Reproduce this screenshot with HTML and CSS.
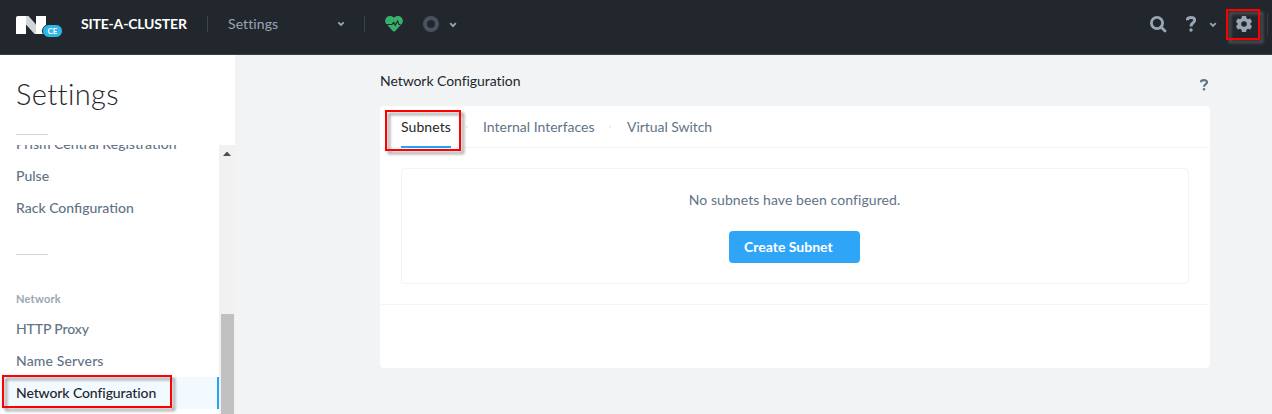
FILE: index.html
```html
<!DOCTYPE html>
<html lang="en">
<head>
<meta charset="utf-8">
<title>Settings - Network Configuration</title>
<link rel="stylesheet" href="styles.css">
</head>
<body>
<header class="topbar">
  <div class="logo">
    <svg width="30" height="18" viewBox="0 0 30 18"><path d="M2 0H10V18H0V2Q0 0 2 0Z" fill="#fff"/><path d="M20 0H30V18H20Z" fill="#fff"/><path d="M10 0H12.500L20 8.500V18H18.500L10 8.500Z" fill="#d4d5d6"/></svg>
    <span class="badge">CE</span>
  </div>
  <span class="cluster">SITE-A-CLUSTER</span>
  <span class="sep"></span>
  <span class="page">Settings</span>
  <svg class="chev chev-page" width="8" height="6" viewBox="0 0 8 6"><path d="M1.300 1.300L4 4L6.700 1.300"/></svg>
  <span class="sep sep-two"></span>
  <svg class="heart" width="18" height="16" viewBox="0 0 18 16"><path d="M9 1.800C7-.6 3.500-.4 1.600 1.400C-.3 3.300-.3 6.200 1.300 8L7.800 15Q9 16.200 10.200 15L16.700 8C18.300 6.200 18.300 3.300 16.400 1.400C14.500-.4 11-.6 9 1.800Z" fill="#36b06b"/><path d="M1 8.500H7L8.700 6.300L10.200 9.200L12.500 5L14 8.500H15.500" fill="none" stroke="#22272e" stroke-width="1.200"/></svg>
  <span class="ring"></span>
  <svg class="chev chev-ring" width="8" height="6" viewBox="0 0 8 6"><path d="M1.200 1.200L4 4.200L6.800 1.200"/></svg>
  <div class="actions">
    <svg class="search" width="17" height="17" viewBox="0 0 17 17"><circle cx="7" cy="7" r="5.600"/><path d="M11 11L15 15"/></svg>
    <svg class="help" width="10" height="16" viewBox="0 0 10 16"><path d="M1.200 4.200C1.300 .6 8.700 .5 8.700 4.300C8.700 7 5 6.600 5 10.400"/><circle cx="5" cy="14" r="1.700"/></svg>
    <svg class="chev chev-help" width="8" height="6" viewBox="0 0 8 6"><path d="M1.200 1.200L4 4L6.800 1.200"/></svg>
    <div class="gear">
      <svg width="16" height="16" viewBox="0 0 16 16"><path fill-rule="evenodd" d="M6 0H10L10.500 2.300L12 3.200L14.200 2.500L16 5.700L14.400 7.200V8.800L16 10.300L14.200 13.500L12 12.800L10.500 13.700L10 16H6L5.500 13.700L4 12.800L1.800 13.500L0 10.300L1.600 8.800V7.200L0 5.700L1.800 2.500L4 3.200L5.500 2.300ZM8 5.200A2.800 2.800 0 1 0 8 10.800A2.800 2.800 0 1 0 8 5.200Z" fill="#9aa5b5"/></svg>
      <span class="mark mark-gear"></span>
    </div>
    <span class="edge"></span>
  </div>
</header>
<div class="layout">
  <aside class="sidebar">
    <h1>Settings</h1>
    <div class="rule"></div>
    <div class="scroller">
      <nav class="menu">
        <a class="item"><span>Prism Central Registration</span></a>
        <a class="item"><span>Pulse</span></a>
        <a class="item"><span>Rack Configuration</span></a>
        <div class="rule rule-group"></div>
        <div class="group">Network</div>
        <a class="item i-proxy"><span>HTTP Proxy</span></a>
        <a class="item i-names"><span>Name Servers</span></a>
        <a class="item i-network active"><span>Network Configuration</span><i class="mark mark-menu"></i></a>
      </nav>
      <div class="scrollbar">
        <svg width="8" height="4" viewBox="0 0 8 4"><path d="M0 4L3.500 0H4.500L8 4Z" fill="#505050"/></svg>
        <div class="thumb"></div>
      </div>
    </div>
  </aside>
  <main class="content">
    <div class="heading">
      <h2>Network Configuration</h2>
      <svg class="help-page" width="8" height="12" viewBox="0 0 8 12"><path d="M1 3.200C1 .5 7 .4 7 3.200C7 5.200 4 5 4 7.800"/><path d="M2.800 9.200H5.200V11.400H2.800Z" class="dot"/></svg>
    </div>
    <section class="panel">
      <div class="tabs">
        <a class="tab t-sub selected">Subnets<i class="mark mark-tab"></i></a>
        <span class="dot-sep"></span>
        <a class="tab t-int">Internal Interfaces</a>
        <span class="dot-sep"></span>
        <a class="tab t-vs">Virtual Switch</a>
      </div>
      <div class="empty">
        <p>No subnets have been configured.</p>
        <button>Create Subnet</button>
      </div>
      <div class="footer"></div>
    </section>
  </main>
</div>
</body>
</html>
```
FILE: styles.css
```css
* { box-sizing: border-box; }
body { margin: 0; height: 414px; overflow: hidden; background: #f2f3f5; font: 14px/20px Lato, sans-serif; color: #627386; }
svg { display: block; flex: none; }

.topbar { height: 55px; display: flex; align-items: flex-start; background: #22272e; border-bottom: 1px solid #36404b; padding-left: 16px; }
.logo { position: relative; width: 65px; padding-top: 16px; }
.badge { position: absolute; left: 26px; top: 24px; width: 21px; height: 14px; border: 1px solid #22272e; border-radius: 7px; background: #2fb6ea; color: #fff; font-size: 8px; font-weight: 700; line-height: 12px; text-align: center; }
.cluster { width: 126px; padding-top: 14px; color: #fff; font-weight: 700; letter-spacing: -.18px; white-space: nowrap; }
.sep { width: 1px; height: 16px; margin-top: 16px; background: #3c444e; }
.page { width: 109px; margin-left: 20px; padding-top: 14px; color: #9aa5b5; letter-spacing: .1px; }
.chev { fill: none; stroke: #9aa5b5; stroke-width: 1.800; }
.chev-page { margin-top: 21px; }
.sep-two { margin-left: 19px; }
.heart { margin: 16px 0 0 20px; }
.ring { width: 16px; height: 16px; margin: 16px 0 0 20px; border: 4px solid #4b525e; border-radius: 50%; }
.chev-ring { margin: 22px 0 0 10px; }
.actions { display: flex; margin-left: auto; }
.search { margin-top: 16px; fill: none; stroke: #9aa5b5; stroke-width: 2.800; stroke-linecap: round; }
.help { margin: 16px 0 0 19px; fill: none; stroke: #9aa5b5; stroke-width: 2.900; }
.help circle { fill: #9aa5b5; stroke: none; }
.chev-help { margin: 22px 0 0 13px; }
.gear { position: relative; margin: 16px 15px 0 19px; }
.edge { width: 1px; height: 22px; margin: 13px 4px 0 0; background: #343b45; }

.layout { display: flex; height: 359px; }
.sidebar { width: 235px; background: #fff; display: flex; flex-direction: column; }
h1 { margin: 0; padding: 20px 0 0 16px; height: 79px; color: #22272e; font-size: 29px; line-height: 38px; font-weight: 300; letter-spacing: .4px; }
.rule { width: 32px; height: 1px; margin: 0 0 10px 16px; background: #d1d6de; flex: none; }
.scroller { display: flex; height: 269px; overflow: hidden; }
.menu { flex: 1; margin-top: -17px; }
.item { position: relative; display: block; height: 32px; padding: 6px 0 0 16px; font-weight: 500; white-space: nowrap; }
.i-proxy { letter-spacing: -.12px; }
.i-names { letter-spacing: .15px; }
.i-network { letter-spacing: -.1px; }
.rule-group { margin-top: 30px; margin-bottom: 34px; }
.group { height: 24px; padding-left: 16px; color: #9aa5b5; font-size: 11px; font-weight: 700; letter-spacing: .25px; }
.active { background: #f2faff; color: #22272e; border-right: 2px solid #22a5f7; }
.scrollbar { width: 16px; background: #f1f1f1; padding: 7px 0 0 4px; }
.thumb { width: 13px; height: 100px; margin: 158px 0 0 -2px; background: #c1c1c1; }

.content { width: 830px; margin-left: 145px; }
.heading { display: flex; justify-content: space-between; height: 51px; padding: 16px 2px 0 0; }
h2 { margin: 0; font-size: 14px; line-height: 20px; font-weight: 400; color: #22272e; letter-spacing: -.06px; }
.help-page { margin-top: 8px; fill: none; stroke: #627386; stroke-width: 2.200; }
.help-page .dot { fill: #627386; stroke: none; }
.panel { height: 262px; background: #fff; border-radius: 4px; padding: 0 1px; }
.tabs { height: 42px; display: flex; padding-left: 20px; border-bottom: 1px solid #f2f3f5; }
.tab { position: relative; height: 42px; padding-top: 11px; white-space: nowrap; }
.t-sub { width: 50px; letter-spacing: .08px; }
.t-int { width: 111px; }
.t-vs { margin-left: 1px; letter-spacing: -.05px; }
.selected { color: #22272e; border-bottom: 2px solid #22a5f7; }
.dot-sep { width: 2px; height: 2px; margin: 20px 15px 0; background: #eceef1; }
.empty { height: 116px; margin: 20px; border: 1px solid #f2f3f5; border-radius: 4px; display: flex; flex-direction: column; align-items: center; padding-right: 1px; }
.empty p { margin: 21px 0; white-space: nowrap; letter-spacing: .08px; }
button { width: 131px; height: 32px; border: 0; border-radius: 4px; background: #2fa5f8; color: #fff; padding: 0 0 0 15px; text-align: left; font: 700 14px/20px Lato, sans-serif; }
.footer { border-top: 1px solid #f2f3f5; }

/* Red callout frames drawn over the controls */
.mark { position: absolute; border: 2px solid #f00; filter: drop-shadow(3px 3px 1.500px rgba(110, 110, 110, .75)); }
.mark-gear { left: -10px; top: -7px; width: 34px; height: 31px; }
.mark-menu { left: 2px; top: -2px; width: 170px; height: 33px; }
.mark-tab { left: -16px; top: 4px; width: 76px; height: 41px; }
```
